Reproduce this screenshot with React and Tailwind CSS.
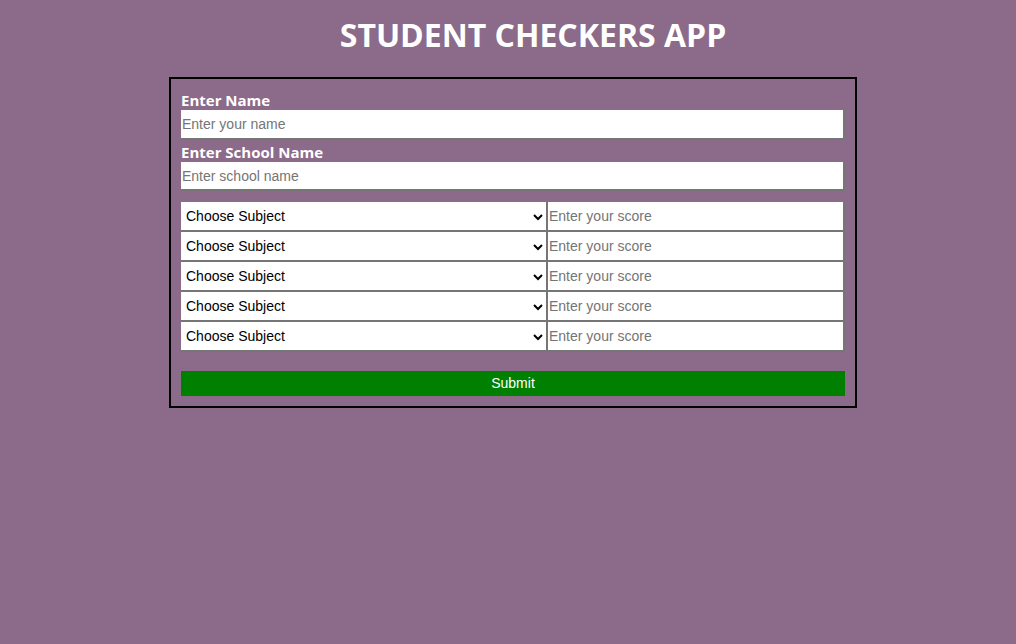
import React from 'react';

const subjects = ['Mathematics', 'English', 'Physics', 'Chemistry', 'Biology'];

const SubjectRow = () => (
  <div className="flex h-[30px]">
    <select
      defaultValue=""
      className="w-[367px] h-[30px] bg-white text-black text-[14px] pl-[1px] border-r-2 border-b-2 border-[#767676] outline-none"
      style={{ fontFamily: '"Liberation Sans", Arial, sans-serif' }}
    >
      <option value="">Choose Subject</option>
      {subjects.map((s) => (
        <option key={s} value={s}>{s}</option>
      ))}
    </select>
    <input
      type="text"
      placeholder="Enter your score"
      className="flex-1 h-[30px] bg-white text-black text-[14px] pl-[1px] border-r-2 border-b-2 border-[#767676] outline-none placeholder:text-[#757575]"
      style={{ fontFamily: '"Liberation Sans", Arial, sans-serif' }}
    />
  </div>
);

export default function App() {
  return (
    <div className="min-h-[644px] w-full bg-[#8b6a8a]">
      <h1 className="pt-[15px] pl-[50px] text-center text-white font-bold text-[32px] leading-[40px] font-['Open_Sans',sans-serif]">
        STUDENT CHECKERS APP
      </h1>
      <div className="ml-[169px] mt-[22px] w-[688px] border-2 border-black px-[10px] pt-[12px] pb-[10px]">
        <label className="block text-white font-bold text-[15px] leading-[18px] mb-[1px] font-['Open_Sans',sans-serif]">
          Enter Name
        </label>
        <input
          type="text"
          placeholder="Enter your name"
          className="block w-full h-[30px] bg-white text-black text-[14px] pl-[1px] border-r-2 border-b-2 border-[#767676] outline-none placeholder:text-[#757575] font-['Liberation_Sans',Arial,sans-serif]"
        />
        <label className="block mt-[3px] text-white font-bold text-[15px] leading-[18px] mb-[1px] font-['Open_Sans',sans-serif]">
          Enter School Name
        </label>
        <input
          type="text"
          placeholder="Enter school name"
          className="block w-full h-[29px] bg-white text-black text-[14px] pl-[1px] border-r-2 border-b-2 border-[#767676] outline-none placeholder:text-[#757575] font-['Liberation_Sans',Arial,sans-serif]"
        />
        <div className="mt-[11px] flex flex-col">
          <SubjectRow />
          <SubjectRow />
          <SubjectRow />
          <SubjectRow />
          <SubjectRow />
        </div>
        <button
          type="button"
          className="mt-[19px] block w-full h-[25px] bg-[#008000] text-white text-[14px] font-['Liberation_Sans',Arial,sans-serif]"
        >
          Submit
        </button>
      </div>
    </div>
  );
}
